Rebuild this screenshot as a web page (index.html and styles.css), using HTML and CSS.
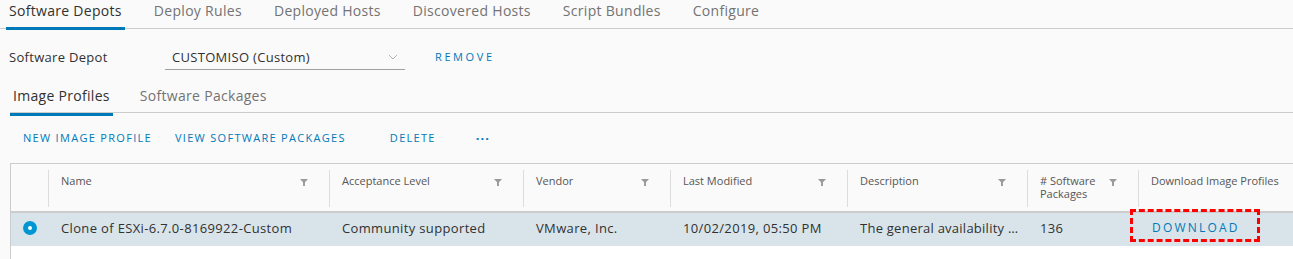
FILE: index.html
```html
<!DOCTYPE html>
<html lang="en">
<head>
    <meta charset="UTF-8">
    <title>Auto Deploy</title>
    <link rel="stylesheet" href="styles.css">
</head>
<body>
    <nav class="main-tabs">
        <a class="tab active">Software Depots</a>
        <a class="tab">Deploy Rules</a>
        <a class="tab">Deployed Hosts</a>
        <a class="tab">Discovered Hosts</a>
        <a class="tab">Script Bundles</a>
        <a class="tab">Configure</a>
    </nav>

    <div class="depot-row">
        <label class="depot-label">Software Depot</label>
        <div class="depot-select">
            <span>CUSTOMISO (Custom)</span>
            <svg class="chevron" width="10" height="6" viewBox="0 0 10 6">
                <path d="M1 1 L5 5 L9 1" fill="none" stroke="#b3b3b3" stroke-width="1"/>
            </svg>
        </div>
        <a class="link-btn remove">REMOVE</a>
    </div>

    <nav class="sub-tabs">
        <a class="tab active">Image Profiles</a>
        <a class="tab">Software Packages</a>
    </nav>

    <div class="toolbar">
        <a class="tool">NEW IMAGE PROFILE</a>
        <a class="tool">VIEW SOFTWARE PACKAGES</a>
        <a class="tool tool-delete">DELETE</a>
        <a class="tool tool-more">&middot;&middot;&middot;</a>
    </div>

    <div class="grid">
        <div class="grid-head">
            <div class="th th-select"></div>
            <div class="th"><span class="th-text">Name</span><i class="filter"></i></div>
            <div class="th"><span class="th-text">Acceptance Level</span><i class="filter"></i></div>
            <div class="th"><span class="th-text">Vendor</span><i class="filter"></i></div>
            <div class="th"><span class="th-text">Last Modified</span><i class="filter"></i></div>
            <div class="th"><span class="th-text">Description</span><i class="filter"></i></div>
            <div class="th"><span class="th-text">#&nbsp;Software Packages</span><i class="filter"></i></div>
            <div class="th"><span class="th-text">Download Image Profiles</span></div>
        </div>
        <div class="grid-body">
            <div class="grid-row selected">
                <div class="td td-select"><span class="radio"></span></div>
                <div class="td">Clone of ESXi-6.7.0-8169922-Custom</div>
                <div class="td">Community supported</div>
                <div class="td">VMware, Inc.</div>
                <div class="td">10/02/2019, 05:50 PM</div>
                <div class="td td-ellipsis">The general availability release of VMware ESXi Server 6.7.0</div>
                <div class="td">136</div>
                <div class="td td-download"><a class="link-btn download">DOWNLOAD</a></div>
            </div>
        </div>
    </div>
</body>
</html>
```

FILE: styles.css
```css
body {
    margin: 0;
    background-color: #fafafa;
    font-family: "Open Sans", sans-serif;
    color: #333;
    overflow: hidden;
}

/* top level tabs */
.main-tabs {
    display: flex;
    gap: 26px;
    height: 28px;
    padding-left: 6px;
    border-bottom: 1px solid #ccc;
}
.tab {
    display: block;
    height: 27px;
    padding: 0 3px;
    line-height: 22px;
    font-size: 14px;
    letter-spacing: 0.3px;
    color: #737373;
    border-bottom: 3px solid transparent;
    cursor: pointer;
}
.tab.active {
    color: #313131;
    border-bottom-color: #0079b8;
}

/* depot selector */
.depot-row {
    display: flex;
    align-items: flex-start;
    margin-top: 16px;
    padding-left: 9px;
    font-size: 13px;
    letter-spacing: 0.3px;
}
.depot-label {
    width: 156px;
    line-height: 24px;
    color: #313131;
}
.depot-select {
    display: flex;
    align-items: center;
    justify-content: space-between;
    width: 226px;
    height: 24px;
    padding: 0 7px;
    border-bottom: 1px solid #a0a0a0;
    color: #313131;
}
.link-btn {
    color: #0079b8;
    cursor: pointer;
}
.remove {
    margin-left: 30px;
    line-height: 24px;
    font-size: 11px;
    letter-spacing: 2.6px;
}

/* sub tabs */
.sub-tabs {
    display: flex;
    gap: 24px;
    height: 34px;
    margin-top: 8px;
    margin-left: 10px;
    border-bottom: 1px solid #ccc;
}
.sub-tabs .tab {
    height: 28px;
    padding-top: 7px;
}

/* actions */
.toolbar {
    display: flex;
    gap: 23px;
    padding-left: 23px;
    height: 50px;
    line-height: 50px;
}
.tool {
    font-size: 11px;
    letter-spacing: 1.3px;
    color: #0079b8;
    cursor: pointer;
}
.tool-delete {
    margin-left: 21px;
}
.tool-more {
    margin-left: 17px;
    letter-spacing: 1px;
    font-weight: 700;
    font-size: 13px;
}

/* datagrid */
.grid {
    margin-left: 10px;
    width: 1300px;
    border-top: 1px solid #ccc;
    border-left: 1px solid #ccc;
    background-color: #fff;
}
.grid-head,
.grid-row {
    display: grid;
    grid-template-columns: 37px 281px 194px 147px 177px 180px 111px 1fr;
}
.grid-head {
    background-color: #fafafa;
    border-bottom: 2px solid #ccc;
}
.th {
    display: flex;
    align-items: flex-start;
    height: 37px;
    margin: 6px 0 4px;
    padding-left: 12px;
    border-left: 1px solid #ddd;
    font-size: 11px;
    line-height: 13px;
    color: #565656;
}
.th-select {
    border-left: none;
}
.th-text {
    padding-top: 4px;
}
.filter {
    flex: none;
    width: 8px;
    height: 7px;
    margin: 9px 21px 0 auto;
    background-color: #9a9a9a;
    clip-path: polygon(0 0, 100% 0, 62% 45%, 62% 100%, 38% 100%, 38% 45%);
}
.grid-body {
    min-height: 80px;
}
.grid-row.selected {
    background-color: #d9e4ea;
}
.td {
    display: flex;
    align-items: center;
    height: 30px;
    padding: 0 0 3px 13px;
    font-size: 13px;
    letter-spacing: 0.35px;
    color: #313131;
    white-space: nowrap;
    overflow: hidden;
}
.td-select {
    justify-content: center;
    padding-left: 0;
}
.td-ellipsis {
    display: block;
    line-height: 30px;
    padding-right: 4px;
    letter-spacing: 0.25px;
    text-overflow: ellipsis;
}
.td-download {
    overflow: visible;
}
.radio {
    width: 14px;
    height: 14px;
    border-radius: 50%;
    background-color: #fff;
    box-shadow: inset 0 0 0 5px #0095d3;
}
.download {
    position: relative;
    margin-left: 1px;
    font-size: 12px;
    letter-spacing: 2.2px;
    line-height: 18px;
}
/* red highlight drawn over the button */
.download::after {
    content: "";
    position: absolute;
    top: -10px;
    bottom: -5px;
    left: -22px;
    right: -20px;
    border: 3px dashed #f00;
}
```
